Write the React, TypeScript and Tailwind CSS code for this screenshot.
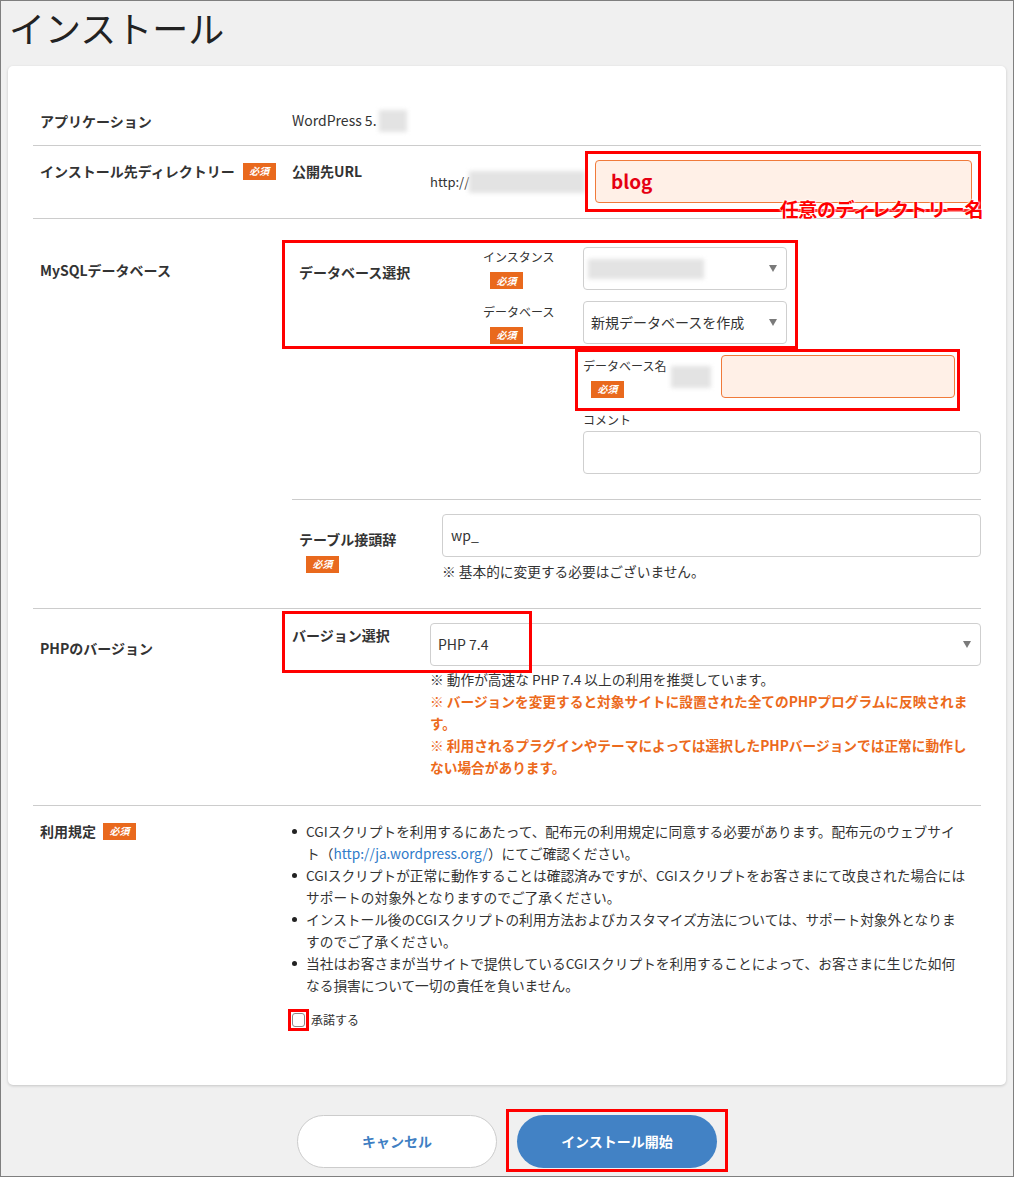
import React from 'react';

const Badge = ({ className = '' }: { className?: string }) => (
  <span className={`inline-flex items-center justify-center w-[33px] h-[17px] bg-[#e9691d] text-white text-[10px] font-bold italic leading-none ${className}`}>必須</span>
);

const Blur = ({ className = '' }: { className?: string }) => (
  <span className={`block bg-[#e3e3e3] blur-[2px] ${className}`} />
);

const Arrow = () => (
  <svg width="8" height="7" viewBox="0 0 8 7" className="shrink-0">
    <path d="M0 0h8L4 7z" fill="#7a7a7a" />
  </svg>
);

const Select = ({ className = '', children }: { className?: string; children?: React.ReactNode }) => (
  <div className={`h-[43px] bg-white border border-[#cfcfcf] rounded-[4px] flex items-center justify-between pl-[7px] pr-[9px] text-[14px] ${className}`}>
    <div className="flex-1 min-w-0 flex items-center">{children}</div>
    <Arrow />
  </div>
);

const Row = ({ label, badge, labelPt, children, className = '' }: { label: string; badge?: boolean; labelPt: string; children: React.ReactNode; className?: string }) => (
  <div className={`flex border-b border-[#cccccc] ${className}`}>
    <div className={`w-[259px] shrink-0 pl-[7px] ${labelPt}`}>
      <div className="flex items-center gap-[8px] text-[14px] font-bold leading-[20px]">
        {label}
        {badge && <Badge />}
      </div>
    </div>
    <div className="flex-1 min-w-0">{children}</div>
  </div>
);

export default function App() {
  return (
    <div className="w-[1014px] h-[1177px] border border-[#7f7f7f] bg-[#f0f0f0] text-[#333] font-['Noto_Sans_CJK_JP','Noto_Sans',sans-serif]">
      <div className="h-[65px] pl-[8px] pt-[4px]">
        <h1 className="text-[36px] leading-[44px] font-normal text-[#222]">インストール</h1>
      </div>

      <div className="mx-[7px] h-[1019px] bg-white rounded-[5px] shadow-[0_1px_3px_rgba(0,0,0,0.18)] px-[25px] pt-[30px]">
        {/* application */}
        <Row label="アプリケーション" labelPt="pt-[15px]" className="h-[50px]">
          <div className="h-full flex items-center text-[14px]">
            WordPress 5.
            <Blur className="w-[28px] h-[22px] ml-[2px]" />
          </div>
        </Row>

        {/* install dir */}
        <Row label="インストール先ディレクトリー" badge labelPt="pt-[15px]" className="h-[73px]">
          <div className="flex items-start pt-[5px]">
            <div className="w-[138px] shrink-0 mt-[10px] text-[14px] font-bold leading-[20px]">公開先URL</div>
            <div className="w-[155px] shrink-0 h-[61px] flex items-center text-[13px]">
              http://
              <Blur className="w-[118px] h-[22px]" />
            </div>
            <div className="relative w-[397px] h-[61px] border-[3px] border-[#ff0000] pl-[7px] pr-[6px] py-[6px]">
              <div className="h-[43px] bg-[#fff0e7] border border-[#f07a3a] rounded-[4px] flex items-center px-[15px] text-[19px] font-bold text-[#e60012]">blog</div>
              <span className="absolute right-[-5px] bottom-[-11px] text-[19px] leading-[22px] font-bold text-[#ff0000] tracking-[-0.4px] whitespace-nowrap [text-shadow:0_0_2px_#fff,0_0_2px_#fff,0_0_3px_#fff]">任意のディレクトリー名</span>
            </div>
          </div>
        </Row>

        {/* mysql */}
        <Row label="MySQLデータベース" labelPt="pt-[41px]" className="h-[390px]">
          <div className="pt-[28px]">
            <div className="relative flex w-[495px]">
              <div className="absolute -left-[10px] -right-[11px] -top-[7px] -bottom-[5px] border-[3px] border-[#ff0000] pointer-events-none" />
              <div className="w-[191px] shrink-0 pl-[7px] pt-[15px] text-[14px] font-bold leading-[20px]">データベース選択</div>
              <div className="flex flex-col gap-[11px]">
                <div className="flex">
                  <div className="w-[100px] shrink-0 pt-[2px]">
                    <div className="text-[12px] leading-[16px]">インスタンス</div>
                    <Badge className="mt-[7px] ml-[7px]" />
                  </div>
                  <Select className="w-[204px] !pl-[4px]">
                    <Blur className="w-[116px] h-[20px]" />
                  </Select>
                </div>
                <div className="flex">
                  <div className="w-[100px] shrink-0 pt-[3px]">
                    <div className="text-[12px] leading-[16px]">データベース</div>
                    <Badge className="mt-[6px] ml-[7px]" />
                  </div>
                  <Select className="w-[204px]">新規データベースを作成</Select>
                </div>
              </div>
            </div>

            <div className="relative flex w-[372px] ml-[291px] mt-[11px]">
              <div className="absolute -left-[8px] -right-[5px] -top-[6px] -bottom-[13px] border-[3px] border-[#ff0000] pointer-events-none" />
              <div className="w-[88px] shrink-0 pt-[3px]">
                <div className="text-[12px] leading-[16px]">データベース名</div>
                <Badge className="mt-[5px] ml-[8px]" />
              </div>
              <Blur className="w-[40px] h-[22px] mt-[11px] mr-[10px] shrink-0" />
              <div className="w-[234px] h-[43px] bg-[#fff0e7] border border-[#f07a3a] rounded-[4px]" />
            </div>

            <div className="ml-[291px] mt-[14px] text-[12px] leading-[16px]">コメント</div>
            <div className="ml-[291px] mt-[3px] h-[43px] border border-[#cfcfcf] rounded-[4px]" />

            <div className="mt-[25px] h-px bg-[#cccccc]" />

            <div className="flex mt-[14px]">
              <div className="w-[150px] shrink-0 pl-[7px] pt-[15px]">
                <div className="text-[14px] font-bold leading-[20px]">テーブル接頭辞</div>
                <Badge className="mt-[5px] ml-[7px]" />
              </div>
              <div className="flex-1">
                <div className="h-[43px] border border-[#cfcfcf] rounded-[4px] flex items-center px-[8px] text-[14px]">wp_</div>
                <div className="mt-[6px] text-[13.7px] leading-[16px]">※ 基本的に変更する必要はございません。</div>
              </div>
            </div>
          </div>
        </Row>

        {/* php */}
        <Row label="PHPのバージョン" labelPt="pt-[29px]" className="h-[197px]">
          <div className="relative flex pt-[14px]">
            <div className="absolute left-[-10px] top-[2px] w-[250px] h-[62px] border-[3px] border-[#ff0000] pointer-events-none" />
            <div className="w-[138px] shrink-0 pt-[2px] text-[14px] font-bold leading-[20px]">バージョン選択</div>
            <div className="flex-1 min-w-0">
              <Select>PHP 7.4</Select>
              <div className="mt-[2px] text-[13.7px] leading-[22px] whitespace-nowrap">
                <div>※ 動作が高速な PHP 7.4 以上の利用を推奨しています。</div>
                <div className="text-[#ec6a1c] font-bold">
                  ※ バージョンを変更すると対象サイトに設置された全てのPHPプログラムに反映されま<br />す。
                </div>
                <div className="text-[#ec6a1c] font-bold">
                  ※ 利用されるプラグインやテーマによっては選択したPHPバージョンでは正常に動作し<br />ない場合があります。
                </div>
              </div>
            </div>
          </div>
        </Row>

        {/* terms */}
        <div className="flex">
          <div className="w-[259px] shrink-0 pl-[7px] pt-[15px]">
            <div className="flex items-center gap-[7px] text-[14px] font-bold leading-[20px]">
              利用規定
              <Badge />
            </div>
          </div>
          <div className="flex-1 pt-[14px]">
            <ul className="text-[13.7px] leading-[22px] whitespace-nowrap">
              {[
                <>CGIスクリプトを利用するにあたって、配布元の利用規定に同意する必要があります。配布元のウェブサイ<br />ト（<span className="text-[#2f7bc9]">http://ja.wordpress.org/</span>）にてご確認ください。</>,
                <>CGIスクリプトが正常に動作することは確認済みですが、CGIスクリプトをお客さまにて改良された場合には<br />サポートの対象外となりますのでご了承ください。</>,
                <>インストール後のCGIスクリプトの利用方法およびカスタマイズ方法については、サポート対象外となりま<br />すのでご了承ください。</>,
                <>当社はお客さまが当サイトで提供しているCGIスクリプトを利用することによって、お客さまに生じた如何<br />なる損害について一切の責任を負いません。</>,
              ].map((item, i) => (
                <li key={i} className="flex">
                  <span className="w-[14px] h-[22px] shrink-0 flex items-center">
                    <span className="block w-[5px] h-[5px] rounded-full bg-[#222]" />
                  </span>
                  <span>{item}</span>
                </li>
              ))}
            </ul>
            <div className="mt-[16px] flex items-center gap-[6px]">
              <span className="relative block">
                <span className="absolute -left-[4px] -right-[4px] -top-[4px] -bottom-[4px] border-[3px] border-[#ff0000]" />
                <span className="block w-[13px] h-[14px] border border-[#8a8a8a] rounded-[3px] bg-white" />
              </span>
              <span className="text-[12px] leading-[16px]">承諾する</span>
            </div>
          </div>
        </div>
      </div>

      {/* buttons */}
      <div className="flex justify-center gap-[20px] pt-[30px]">
        <button className="w-[200px] h-[53px] rounded-full bg-white border border-[#cccccc] text-[#3f7fc3] text-[14px] font-bold">キャンセル</button>
        <span className="relative block">
          <span className="absolute -left-[11px] -right-[11px] -top-[6px] -bottom-[4px] border-[3px] border-[#ff0000]" />
          <button className="block w-[200px] h-[53px] rounded-full bg-[#4282c5] text-white text-[14px] font-bold">インストール開始</button>
        </span>
      </div>
    </div>
  );
}
